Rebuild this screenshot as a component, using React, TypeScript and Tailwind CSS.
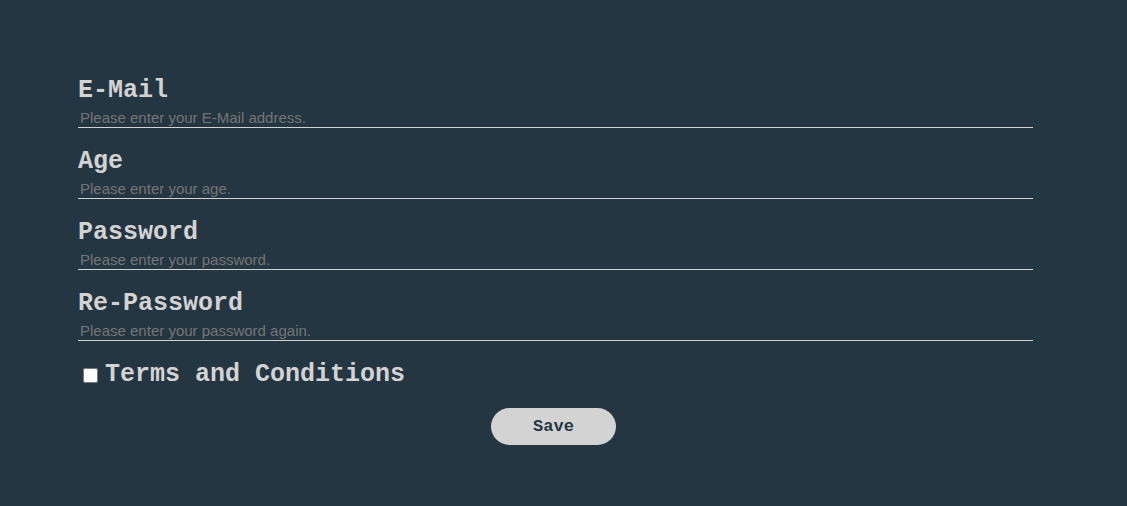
const fields = [
  { id: "email", label: "E-Mail", type: "email", placeholder: "Please enter your E-Mail address." },
  { id: "age", label: "Age", type: "text", placeholder: "Please enter your age." },
  { id: "password", label: "Password", type: "password", placeholder: "Please enter your password." },
  { id: "repassword", label: "Re-Password", type: "password", placeholder: "Please enter your password again." },
];

export default function App() {
  return (
    <main className="min-h-screen bg-[#243642] pt-[75px] pr-[94px] pb-12 pl-[78px] font-['Courier_New','Liberation_Mono',monospace] text-[25px] leading-[28px] font-bold text-[lightgray]">
      <form className="flex flex-col" onSubmit={(e) => e.preventDefault()}>
        {fields.map((f) => (
          <div key={f.id} className="mb-[18px] flex flex-col">
            <label htmlFor={f.id} className="h-8 pt-[2px]">{f.label}</label>
            <input
              id={f.id}
              type={f.type}
              placeholder={f.placeholder}
              className="h-[21px] w-full border-b border-[lightgray] bg-transparent px-[2px] font-['Liberation_Sans',Arial,sans-serif] text-[15px] leading-[18px] font-normal outline-none placeholder:text-[#757575]"
            />
          </div>
        ))}
        <div className="flex items-center gap-[7px] pt-[2px] pl-[5px]">
          <input id="terms" type="checkbox" className="h-[15px] w-[15px]" />
          <label htmlFor="terms">Terms and Conditions</label>
        </div>
        <div className="flex justify-center pt-[19px] pr-1">
          <button type="submit" className="h-[37px] w-[125px] rounded-full bg-[lightgray] text-[17px] leading-5 font-bold text-[#243642]">
            Save
          </button>
        </div>
      </form>
    </main>
  );
}
